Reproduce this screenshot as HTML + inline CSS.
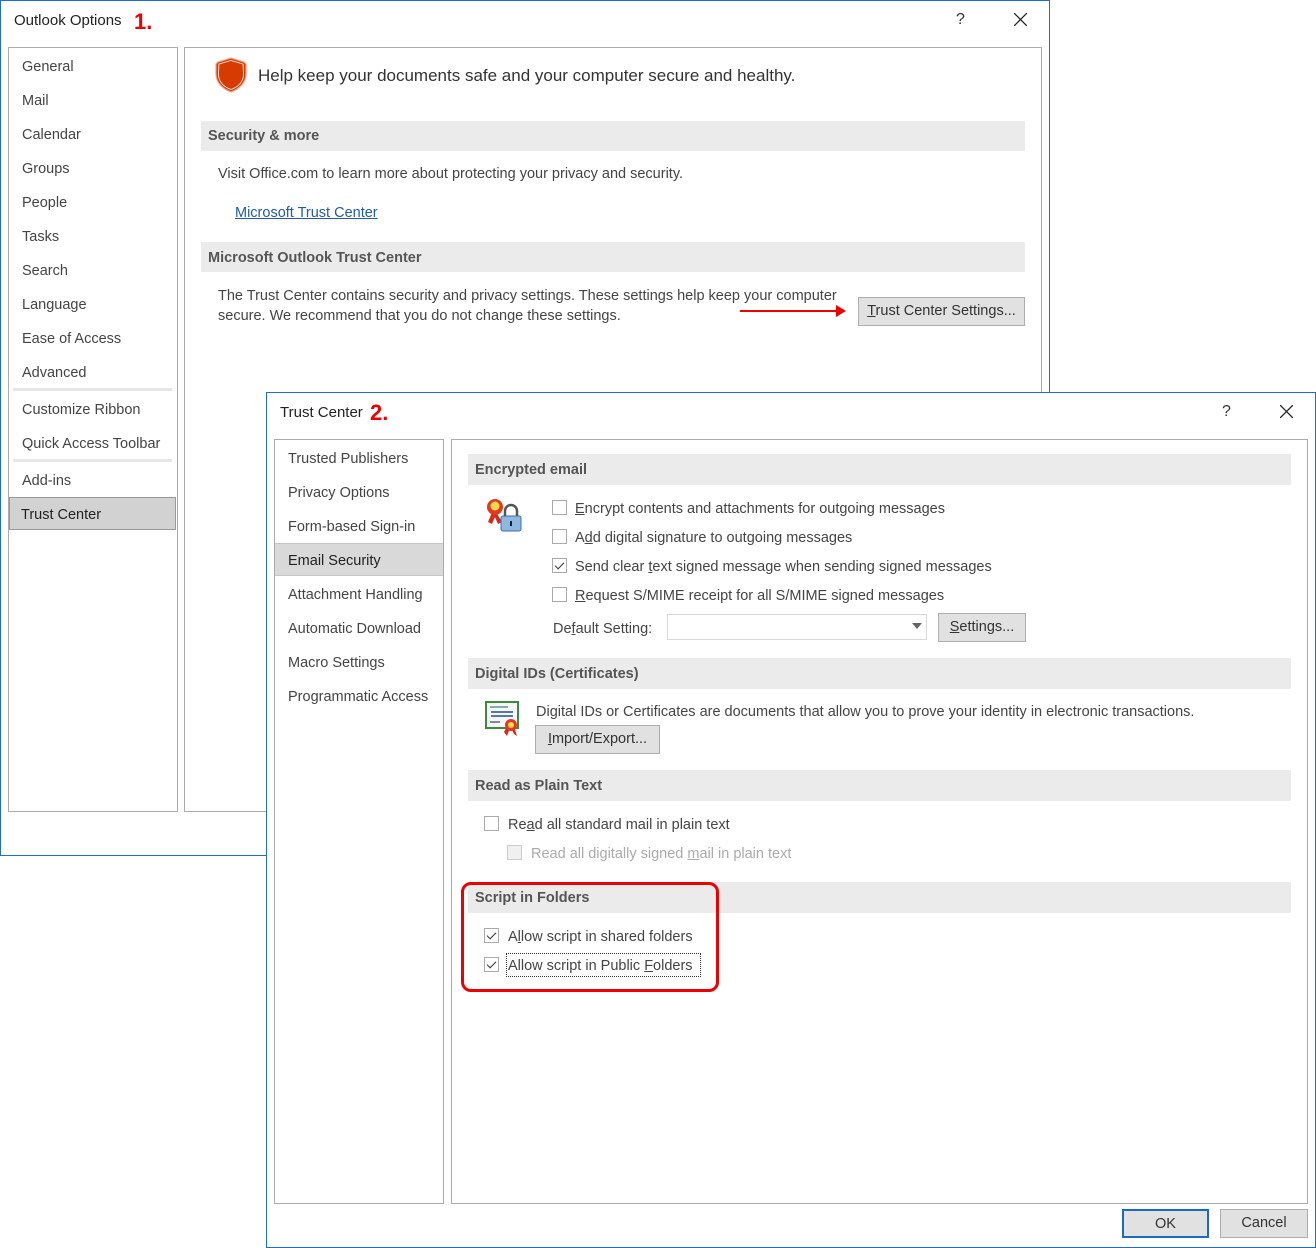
<!DOCTYPE html>
<html><head><meta charset="utf-8"><style>
*{margin:0;padding:0;box-sizing:border-box}
body{width:1316px;height:1248px;background:#fff;position:relative;overflow:hidden;font-family:"Liberation Sans",sans-serif;color:#444}
.a{position:absolute}
.t{position:absolute;white-space:nowrap;font-size:14.5px;line-height:18px;color:#444;margin-top:1px}
.b{font-weight:bold;color:#555}
.hd{position:absolute;background:#ebebeb}
.cb{position:absolute;width:15px;height:15px;border:1px solid #aaa;background:#fff}
.cb.k::after{content:"";position:absolute;left:4px;top:1px;width:4px;height:8px;border:solid #333;border-width:0 1.5px 1.5px 0;transform:rotate(45deg)}
.btn{position:absolute;background:#e1e1e1;border:1px solid #adadad;font-size:14.5px;line-height:27px;text-align:center;color:#333}
u{text-decoration:underline}
</style></head><body>
<!-- Window 1 -->
<div class="a" style="left:0;top:0;width:1050px;height:856px;border:1px solid #1e6fc8;background:#fff"></div>
<div class="t" style="left:14px;top:11px;font-size:15px;color:#222">Outlook Options</div>
<div class="t" style="left:134px;top:8px;font-size:22px;line-height:26px;color:#e00;font-weight:bold">1.</div>
<div class="t" style="left:956px;top:10px;font-size:16px;color:#333">?</div>
<svg class="a" style="left:1014px;top:13px" width="13" height="13"><path d="M0 0L13 13M13 0L0 13" stroke="#222" stroke-width="1.3"/></svg>
<div class="a" style="left:8px;top:47px;width:170px;height:765px;border:1px solid #ababab"></div>
<div class="a" style="left:184px;top:47px;width:858px;height:765px;border:1px solid #ababab"></div>
<div class="t" style="left:22px;top:57px">General</div>
<div class="t" style="left:22px;top:91px">Mail</div>
<div class="t" style="left:22px;top:125px">Calendar</div>
<div class="t" style="left:22px;top:159px">Groups</div>
<div class="t" style="left:22px;top:193px">People</div>
<div class="t" style="left:22px;top:227px">Tasks</div>
<div class="t" style="left:22px;top:261px">Search</div>
<div class="t" style="left:22px;top:295px">Language</div>
<div class="t" style="left:22px;top:329px">Ease of Access</div>
<div class="t" style="left:22px;top:363px">Advanced</div>
<div class="a" style="left:13px;top:388px;width:159px;height:3px;background:#e6e6e6"></div>
<div class="t" style="left:22px;top:400px">Customize Ribbon</div>
<div class="t" style="left:22px;top:434px">Quick Access Toolbar</div>
<div class="a" style="left:13px;top:459px;width:159px;height:3px;background:#e6e6e6"></div>
<div class="t" style="left:22px;top:471px">Add-ins</div>
<div class="a" style="left:9px;top:497px;width:167px;height:33px;background:#d3d2d2;border:1px solid #999"></div>
<div class="t" style="left:21px;top:505px;color:#222">Trust Center</div>
<svg class="a" style="left:213px;top:56px" width="36" height="38" viewBox="0 0 36 38"><path d="M18 2 L31 6 L33 8 L33 18 C33 27 26 33 18 36 C10 33 3 27 3 18 L3 8 L5 6 Z" fill="#d83b01" stroke="#f2a48a" stroke-width="1.2"/><path d="M18 4.5 L30 8 L30.5 18 C30.5 26 25 31 18 33.5 C11 31 5.5 26 5.5 18 L6 8 Z" fill="none" stroke="#fff" stroke-width="0.8"/></svg>
<div class="t" style="left:258px;top:65px;font-size:17px;line-height:20px;color:#333">Help keep your documents safe and your computer secure and healthy.</div>
<div class="hd" style="left:201px;top:121px;width:824px;height:30px"></div>
<div class="t b" style="left:208px;top:126px">Security &amp; more</div>
<div class="t" style="left:218px;top:164px">Visit Office.com to learn more about protecting your privacy and security.</div>
<div class="t" style="left:235px;top:203px;color:#1f5ba8;text-decoration:underline">Microsoft Trust Center</div>
<div class="hd" style="left:201px;top:242px;width:824px;height:30px"></div>
<div class="t b" style="left:208px;top:248px">Microsoft Outlook Trust Center</div>
<div class="t" style="left:218px;top:286px">The Trust Center contains security and privacy settings. These settings help keep your computer</div>
<div class="t" style="left:218px;top:306px">secure. We recommend that you do not change these settings.</div>
<div class="a" style="left:740px;top:310px;width:100px;height:2px;background:#e00"></div>
<svg class="a" style="left:836px;top:305px" width="10" height="12"><path d="M0 0 L10 6 L0 12Z" fill="#e00"/></svg>
<div class="btn" style="left:858px;top:297px;width:167px;height:29px"><u>T</u>rust Center Settings...</div>

<!-- Window 2 -->
<div class="a" style="left:266px;top:392px;width:1050px;height:856px;border:1px solid #1e6fc8;background:#fff"></div>
<div class="t" style="left:280px;top:403px;font-size:15px;color:#222">Trust Center</div>
<div class="t" style="left:370px;top:399px;font-size:22px;line-height:26px;color:#e00;font-weight:bold">2.</div>
<div class="t" style="left:1222px;top:402px;font-size:16px;color:#333">?</div>
<svg class="a" style="left:1280px;top:405px" width="13" height="13"><path d="M0 0L13 13M13 0L0 13" stroke="#222" stroke-width="1.3"/></svg>
<div class="a" style="left:274px;top:439px;width:170px;height:765px;border:1px solid #ababab"></div>
<div class="a" style="left:451px;top:439px;width:857px;height:765px;border:1px solid #ababab"></div>
<div class="t" style="left:288px;top:449px">Trusted Publishers</div>
<div class="t" style="left:288px;top:483px">Privacy Options</div>
<div class="t" style="left:288px;top:517px">Form-based Sign-in</div>
<div class="a" style="left:275px;top:543px;width:168px;height:33px;background:#d9d9d9;border-top:1px solid #c6c6c6;border-bottom:1px solid #c6c6c6"></div>
<div class="t" style="left:288px;top:551px;color:#222">Email Security</div>
<div class="t" style="left:288px;top:585px">Attachment Handling</div>
<div class="t" style="left:288px;top:619px">Automatic Download</div>
<div class="t" style="left:288px;top:653px">Macro Settings</div>
<div class="t" style="left:288px;top:687px">Programmatic Access</div>

<div class="hd" style="left:468px;top:454px;width:823px;height:31px"></div>
<div class="t b" style="left:475px;top:460px">Encrypted email</div>
<svg class="a" style="left:484px;top:496px" width="40" height="36" viewBox="0 0 40 36"><path d="M4 26 L9 14 L13 16 L8 28Z M12 16 L18 26 L14 28 L9 17Z" fill="#d82a1a"/><circle cx="11" cy="11" r="8" fill="#e03a20"/><circle cx="11" cy="10" r="4.5" fill="#f6d84a"/><rect x="17" y="20" width="20" height="15" rx="2" fill="#8fb8e0" stroke="#3a6ea8"/><path d="M21 20 V15 a6 6 0 0 1 12 0 V20" fill="none" stroke="#555" stroke-width="2.5"/><rect x="26" y="25" width="2" height="5" fill="#123"/></svg>
<div class="cb" style="left:552px;top:500px"></div>
<div class="t" style="left:575px;top:499px"><u>E</u>ncrypt contents and attachments for outgoing messages</div>
<div class="cb" style="left:552px;top:529px"></div>
<div class="t" style="left:575px;top:528px">A<u>d</u>d digital signature to outgoing messages</div>
<div class="cb k" style="left:552px;top:558px"></div>
<div class="t" style="left:575px;top:557px">Send clear <u>t</u>ext signed message when sending signed messages</div>
<div class="cb" style="left:552px;top:587px"></div>
<div class="t" style="left:575px;top:586px"><u>R</u>equest S/MIME receipt for all S/MIME signed messages</div>
<div class="t" style="left:553px;top:619px">De<u>f</u>ault Setting:</div>
<div class="a" style="left:667px;top:614px;width:260px;height:26px;border:1px solid #d9d9d9"></div>
<svg class="a" style="left:912px;top:623px" width="10" height="6"><path d="M0 0H10L5 6Z" fill="#666"/></svg>
<div class="btn" style="left:938px;top:613px;width:88px;height:29px"><u>S</u>ettings...</div>

<div class="hd" style="left:468px;top:658px;width:823px;height:31px"></div>
<div class="t b" style="left:475px;top:664px">Digital IDs (Certificates)</div>
<svg class="a" style="left:484px;top:700px" width="40" height="38" viewBox="0 0 40 38"><rect x="1" y="1" width="34" height="28" fill="#3c8a3c"/><rect x="3" y="3" width="30" height="24" fill="#f4f6f8"/><rect x="6" y="6" width="18" height="2" fill="#8aa"/><rect x="7" y="11" width="22" height="2" fill="#5577aa"/><rect x="7" y="15" width="22" height="2" fill="#5577aa"/><rect x="6" y="21" width="10" height="2" fill="#889"/><path d="M20 32 L23 26 L26 28 L23 36Z M27 28 L30 26 L33 36 L30 34Z" fill="#d82a1a"/><circle cx="27" cy="25" r="6" fill="#e03a20"/><circle cx="27" cy="25" r="3" fill="#f6d84a"/></svg>
<div class="t" style="left:536px;top:702px">Digital IDs or Certificates are documents that allow you to prove your identity in electronic transactions.</div>
<div class="btn" style="left:535px;top:725px;width:125px;height:29px"><u>I</u>mport/Export...</div>

<div class="hd" style="left:468px;top:770px;width:823px;height:31px"></div>
<div class="t b" style="left:475px;top:776px">Read as Plain Text</div>
<div class="cb" style="left:484px;top:816px"></div>
<div class="t" style="left:508px;top:815px">Re<u>a</u>d all standard mail in plain text</div>
<div class="cb" style="left:507px;top:845px;background:#f0f0f0;border-color:#ccc"></div>
<div class="t" style="left:531px;top:844px;color:#aaa">Read all digitally signed <u>m</u>ail in plain text</div>

<div class="hd" style="left:468px;top:882px;width:823px;height:31px"></div>
<div class="t b" style="left:475px;top:888px">Script in Folders</div>
<div class="cb k" style="left:484px;top:928px"></div>
<div class="t" style="left:508px;top:927px">A<u>l</u>low script in shared folders</div>
<div class="cb k" style="left:484px;top:957px"></div>
<div class="a" style="left:506px;top:953px;width:195px;height:24px;border:1px dotted #333"></div>
<div class="t" style="left:508px;top:956px">Allow script in Public <u>F</u>olders</div>
<div class="a" style="left:461px;top:882px;width:258px;height:110px;border:3px solid #e00;border-radius:10px"></div>

<div class="btn" style="left:1122px;top:1209px;width:87px;height:29px;border:2px solid #1a6bc0;line-height:26px">OK</div>
<div class="btn" style="left:1220px;top:1209px;width:88px;height:29px">Cancel</div>
</body></html>
